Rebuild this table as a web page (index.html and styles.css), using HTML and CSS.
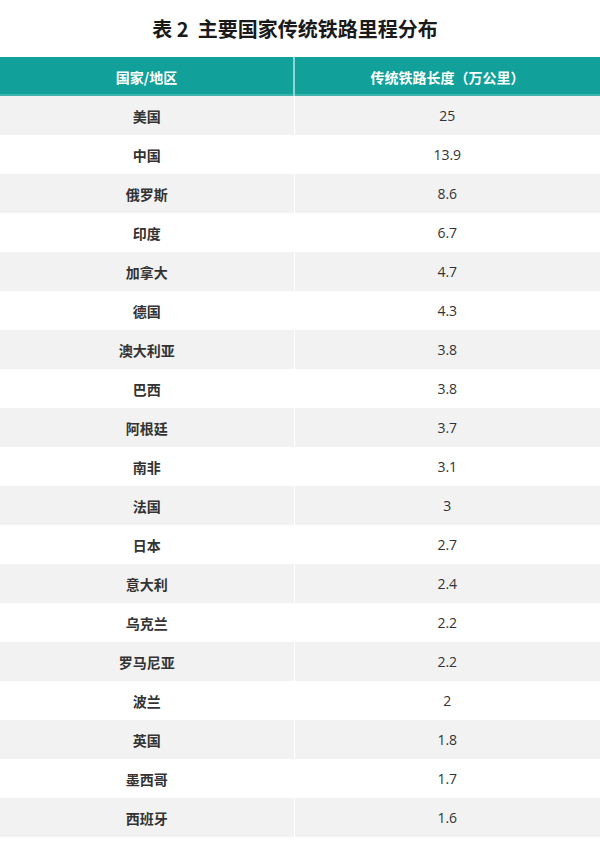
FILE: index.html
```html
<!DOCTYPE html>
<html lang="zh">
<head>
<meta charset="utf-8">
<link rel="stylesheet" href="styles.css">
</head>
<body>
<h1 class="title">表 2&nbsp; 主要国家传统铁路里程分布</h1>
<table class="rail">
  <thead>
    <tr><th>国家/地区</th><th>传统铁路长度（万公里）</th></tr>
  </thead>
  <tbody>
    <tr><td class="name">美国</td><td>25</td></tr>
    <tr><td class="name">中国</td><td>13.9</td></tr>
    <tr><td class="name">俄罗斯</td><td>8.6</td></tr>
    <tr><td class="name">印度</td><td>6.7</td></tr>
    <tr><td class="name">加拿大</td><td>4.7</td></tr>
    <tr><td class="name">德国</td><td>4.3</td></tr>
    <tr><td class="name">澳大利亚</td><td>3.8</td></tr>
    <tr><td class="name">巴西</td><td>3.8</td></tr>
    <tr><td class="name">阿根廷</td><td>3.7</td></tr>
    <tr><td class="name">南非</td><td>3.1</td></tr>
    <tr><td class="name">法国</td><td>3</td></tr>
    <tr><td class="name">日本</td><td>2.7</td></tr>
    <tr><td class="name">意大利</td><td>2.4</td></tr>
    <tr><td class="name">乌克兰</td><td>2.2</td></tr>
    <tr><td class="name">罗马尼亚</td><td>2.2</td></tr>
    <tr><td class="name">波兰</td><td>2</td></tr>
    <tr><td class="name">英国</td><td>1.8</td></tr>
    <tr><td class="name">墨西哥</td><td>1.7</td></tr>
    <tr><td class="name">西班牙</td><td>1.6</td></tr>
  </tbody>
</table>
</body>
</html>
```
FILE: styles.css
```css
html, body {
  margin: 0;
  padding: 0;
  background: #ffffff;
}
body {
  width: 600px;
  font-family: "Open Sans", "Noto Sans CJK SC", sans-serif;
  color: #333333;
}
.title {
  margin: 0;
  padding-right: 10px;
  height: 57px;
  line-height: 58px;
  text-align: center;
  font-family: "Noto Sans CJK SC", sans-serif;
  font-size: 20px;
  font-weight: 700;
  color: #1a1a1a;
}
.rail {
  width: 600px;
  border-collapse: collapse;
  table-layout: fixed;
}
.rail th, .rail td {
  height: 39px;
  padding: 0;
  text-align: center;
  vertical-align: middle;
  font-size: 14px;
}
.rail th:first-child, .rail td:first-child {
  width: 293px;
}
.rail th {
  background: #11a09a;
  color: #ffffff;
  font-family: "Noto Sans CJK SC", sans-serif;
  font-weight: 700;
  box-shadow: inset 0 -2px 0 #3fb3ae;
}
.rail th + th {
  border-left: 2px solid #8fd6d2;
}
.rail td + td {
  border-left: 1px solid #ffffff;
}
.rail tbody tr:nth-child(odd) td {
  background: #f2f2f2;
}
.rail td.name {
  font-family: "Noto Sans CJK SC", sans-serif;
  font-weight: 700;
  color: #333333;
}
```
